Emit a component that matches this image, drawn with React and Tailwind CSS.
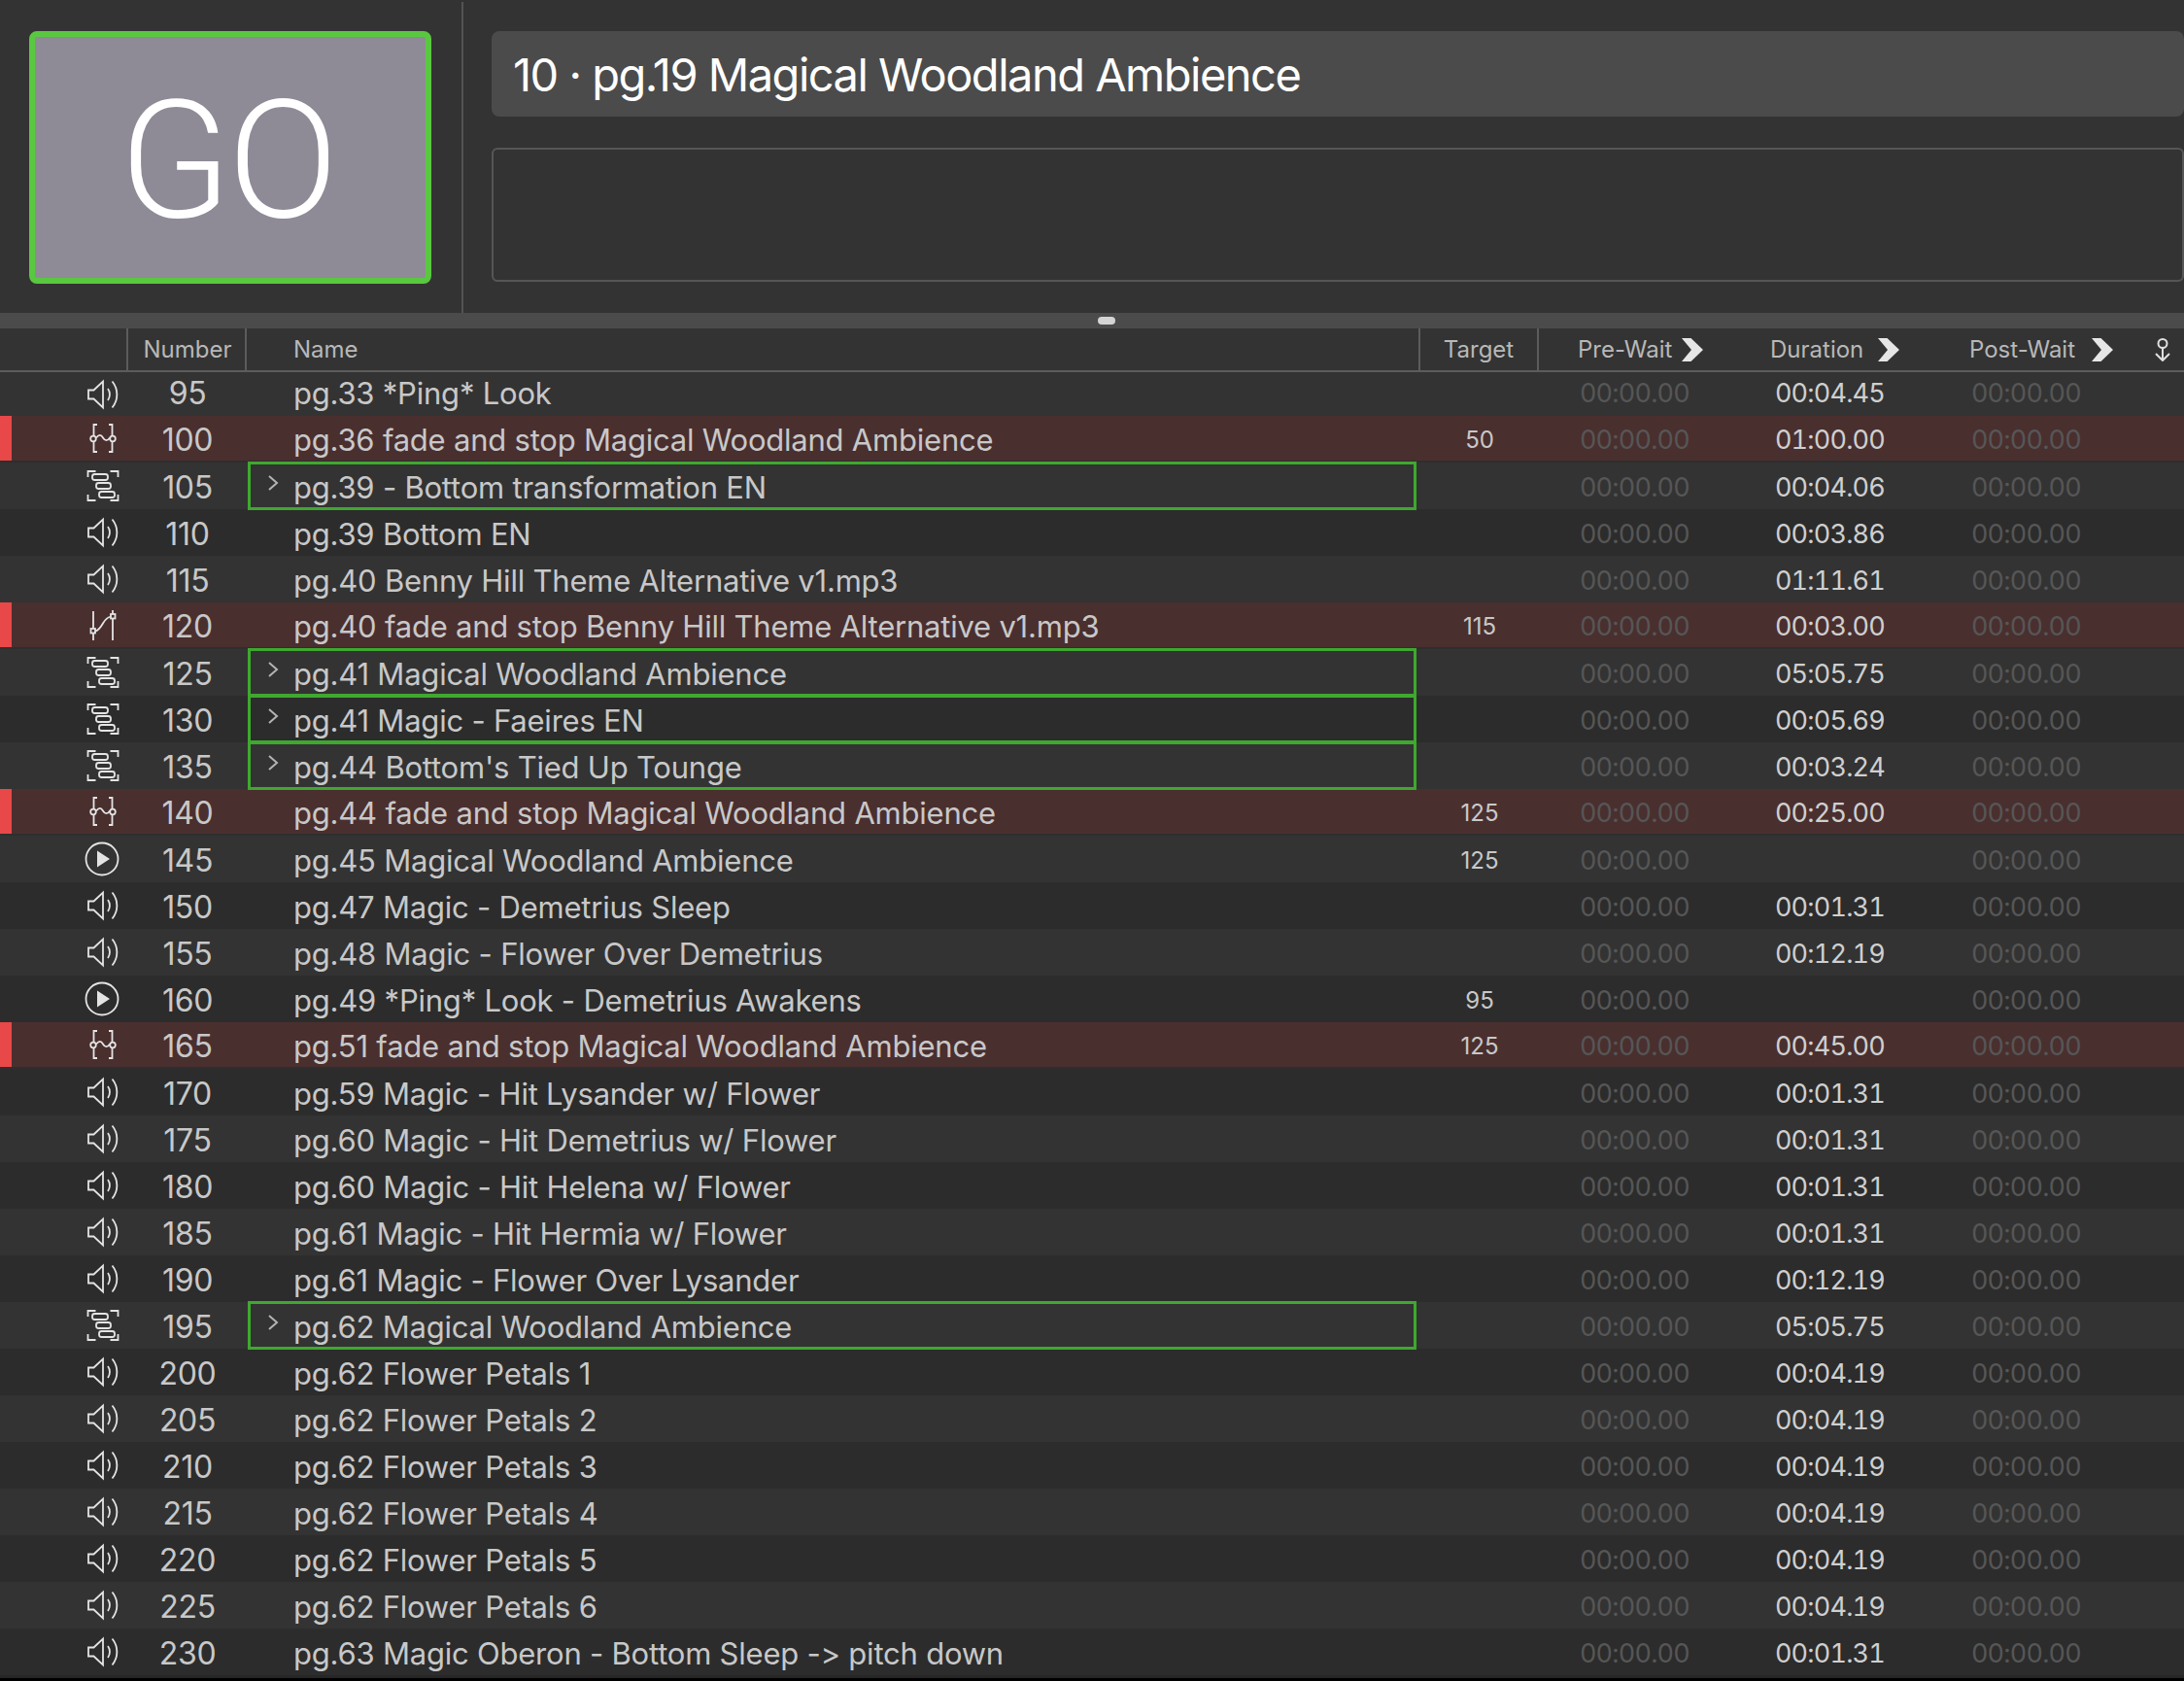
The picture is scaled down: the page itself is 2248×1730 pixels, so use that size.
const SANS = "font-['Inter','Liberation_Sans',sans-serif]";

const cues = [
  { icon: "audio", num: "95", name: "pg.33 *Ping* Look", dur: "00:04.45" },
  { icon: "fade", num: "100", name: "pg.36 fade and stop Magical Woodland Ambience", target: "50", dur: "01:00.00", red: true },
  { icon: "group", num: "105", name: "pg.39 - Bottom transformation EN", dur: "00:04.06" },
  { icon: "audio", num: "110", name: "pg.39 Bottom EN", dur: "00:03.86" },
  { icon: "audio", num: "115", name: "pg.40 Benny Hill Theme Alternative v1.mp3", dur: "01:11.61" },
  { icon: "fadeUp", num: "120", name: "pg.40 fade and stop Benny Hill Theme Alternative v1.mp3", target: "115", dur: "00:03.00", red: true },
  { icon: "group", num: "125", name: "pg.41 Magical Woodland Ambience", dur: "05:05.75" },
  { icon: "group", num: "130", name: "pg.41 Magic - Faeires EN", dur: "00:05.69" },
  { icon: "group", num: "135", name: "pg.44 Bottom's Tied Up Tounge", dur: "00:03.24" },
  { icon: "fade", num: "140", name: "pg.44 fade and stop Magical Woodland Ambience", target: "125", dur: "00:25.00", red: true },
  { icon: "start", num: "145", name: "pg.45 Magical Woodland Ambience", target: "125" },
  { icon: "audio", num: "150", name: "pg.47 Magic - Demetrius Sleep", dur: "00:01.31" },
  { icon: "audio", num: "155", name: "pg.48 Magic - Flower Over Demetrius", dur: "00:12.19" },
  { icon: "start", num: "160", name: "pg.49 *Ping* Look - Demetrius Awakens", target: "95" },
  { icon: "fade", num: "165", name: "pg.51 fade and stop Magical Woodland Ambience", target: "125", dur: "00:45.00", red: true },
  { icon: "audio", num: "170", name: "pg.59 Magic - Hit Lysander w/ Flower", dur: "00:01.31" },
  { icon: "audio", num: "175", name: "pg.60 Magic - Hit Demetrius w/ Flower", dur: "00:01.31" },
  { icon: "audio", num: "180", name: "pg.60 Magic - Hit Helena w/ Flower", dur: "00:01.31" },
  { icon: "audio", num: "185", name: "pg.61 Magic - Hit Hermia w/ Flower", dur: "00:01.31" },
  { icon: "audio", num: "190", name: "pg.61 Magic - Flower Over Lysander", dur: "00:12.19" },
  { icon: "group", num: "195", name: "pg.62 Magical Woodland Ambience", dur: "05:05.75" },
  { icon: "audio", num: "200", name: "pg.62 Flower Petals 1", dur: "00:04.19" },
  { icon: "audio", num: "205", name: "pg.62 Flower Petals 2", dur: "00:04.19" },
  { icon: "audio", num: "210", name: "pg.62 Flower Petals 3", dur: "00:04.19" },
  { icon: "audio", num: "215", name: "pg.62 Flower Petals 4", dur: "00:04.19" },
  { icon: "audio", num: "220", name: "pg.62 Flower Petals 5", dur: "00:04.19" },
  { icon: "audio", num: "225", name: "pg.62 Flower Petals 6", dur: "00:04.19" },
  { icon: "audio", num: "230", name: "pg.63 Magic Oberon - Bottom Sleep -> pitch down", dur: "00:01.31" },
];

function CueIcon({ type }) {
  const common = {
    width: 34,
    height: 34,
    viewBox: "0 0 34 34",
    fill: "none",
    stroke: "#e4e4e4",
    strokeWidth: 1.8,
  };
  if (type === "audio") {
    return (
      <svg {...common}>
        <path d="M2 12.5h5.5L17 3.5v27L7.5 21.5H2z" strokeLinejoin="miter" />
        <path d="M22 11c2.6 3.5 2.6 8.5 0 12M26.5 3.5c6.5 8 6.5 19 0 27" />
      </svg>
    );
  }
  if (type === "group") {
    return (
      <svg {...common}>
        <path d="M1.5 8V2h8M24.5 2h8v6M1.5 26v6h8M24.5 32h8v-6" />
        <rect x="6" y="5" width="16" height="6" rx="2.5" />
        <rect x="10" y="14" width="15" height="6" rx="2.5" />
        <rect x="13" y="23" width="16" height="6" rx="2.5" />
      </svg>
    );
  }
  if (type === "fade") {
    return (
      <svg {...common}>
        <path d="M11 3H7.5v28H11M23 3h3.500v28H23" />
        <circle cx="7" cy="17.5" r="2.8" fill="#4a2f2f" />
        <circle cx="27" cy="17.5" r="2.8" fill="#4a2f2f" />
        <path d="M10 16.5c3-3.5 5-3.5 7 0s5 3.5 7 0" />
      </svg>
    );
  }
  if (type === "fadeUp") {
    return (
      <svg {...common}>
        <path d="M7 3v30M27 2v31" />
        <path d="M9 23.5c3.5-.5 6-4.5 8-8s4-6 8-7" />
        <rect x="4.5" y="21" width="4.5" height="4.5" fill="#4a2f2f" />
        <rect x="25" y="6" width="4.5" height="4.5" fill="#4a2f2f" />
      </svg>
    );
  }
  return (
    <svg {...common} width={36} height={36} viewBox="0 0 36 36">
      <circle cx="18" cy="18" r="16.5" />
      <path d="M13 9.5 26 18 13 26.5z" fill="#e4e4e4" stroke="none" />
    </svg>
  );
}

function HeaderChevron() {
  return (
    <svg className="flex-none" width="22" height="24" viewBox="0 0 22 24" fill="#e6e6e6">
      <path d="M0 0h9.5L22 12 9.5 24H0l10-12z" />
    </svg>
  );
}

function Time({ value, dim, nudge }) {
  return (
    <div className={`text-right tabular-nums text-[27px] tracking-[-0.03em] ${nudge} ${dim ? "text-[#565656]" : "text-[#cfcfcf]"}`}>
      {value}
    </div>
  );
}

function CueRow({ cue, index }) {
  const bg = cue.red ? "bg-[#4a2f2f]" : index % 2 === 0 ? "bg-[#333333]" : "bg-[#2c2c2c]";
  const isGroup = cue.icon === "group";
  // text sits a little below the middle of the row, except the clipped first one
  const nudge = index === 0 ? "pb-[2px]" : "pt-[3px]";

  return (
    <div className={`relative ${index === 0 ? "h-[45px]" : "h-[48px]"} leading-none grid grid-cols-[132px_122px_1208px_122px_155px_201px_202px_1fr] items-center ${bg} ${cue.red ? "border-b-2 border-[#2e2e2e]" : ""}`}>
      {cue.red && <div className="absolute left-0 top-0 bottom-0 w-[12px] bg-[#e84848]" />}
      <div className="flex justify-end pr-[9px]">
        <CueIcon type={cue.icon} />
      </div>
      <div className={`text-center text-[32px] text-[#c8c8c8] tracking-[-0.01em] ${nudge}`}>{cue.num}</div>
      <div className={`relative h-full flex items-center pl-[48px] text-[31px] tracking-[-0.007em] text-[#c8c8c8] whitespace-nowrap [font-feature-settings:'calt'_0] ${nudge}`}>
        {isGroup && (
          <div className="absolute z-10 left-[1px] right-[4px] top-[-1px] bottom-[-1px] border-[3px] border-[#3fa82f]" />
        )}
        {isGroup && (
          <svg className="absolute left-[21px] top-[12px]" width="12" height="18" viewBox="0 0 12 18" fill="none" stroke="#b4b4b4" strokeWidth="2">
            <path d="M2 2l8 7-8 7" />
          </svg>
        )}
        {cue.name}
      </div>
      <div className={`text-center text-[24px] text-[#c8c8c8] ${nudge}`}>{cue.target}</div>
      <Time value="00:00.00" dim nudge={nudge} />
      <Time value={cue.dur} nudge={nudge} />
      <Time value="00:00.00" dim nudge={nudge} />
      <div />
    </div>
  );
}

export default function App() {
  return (
    <div className={`w-[2248px] h-[1730px] overflow-hidden bg-black ${SANS}`}>
      {/* top: go button + cue title */}
      <div className="h-[322px] bg-[#333333] flex pt-[2px]">
        <div className="w-[477px] flex-none pl-[30px] pt-[30px] border-r-2 border-[#545454]">
          <div className="w-[414px] h-[260px] rounded-[8px] border-[6px] border-[#59c840] bg-[#8e8a96] flex items-center justify-center pt-[8px] pr-[6px] text-white text-[168px] font-['Roboto',sans-serif] font-light leading-none tracking-[-0.02em]">
            GO
          </div>
        </div>
        <div className="flex-1 pl-[29px] pt-[30px] flex flex-col">
          <div className="h-[88px] rounded-[8px] bg-[#4b4b4b] flex items-center pl-[22px] pt-[2px] text-white text-[47px] tracking-[-0.032em]">
            10 · pg.19 Magical Woodland Ambience
          </div>
          <div className="mt-[32px] h-[138px] rounded-[6px] border-2 border-[#565656]" />
        </div>
      </div>

      {/* splitter */}
      <div className="h-[16px] bg-[#4b4b4b] flex items-center justify-center">
        <div className="ml-[29px] w-[18px] h-[8px] rounded-full bg-[#d4d4d4]" />
      </div>

      {/* column headers */}
      <div className="h-[45px] bg-[#333333] border-b-2 border-[#5c5c5c] grid grid-cols-[132px_122px_1208px_122px_1fr] items-center text-[24px] text-[#b8b8b8]">
        <div className="h-full border-r-2 border-[#5c5c5c]" />
        <div className="h-full border-r-2 border-[#5c5c5c] flex items-center justify-center pl-[2px]">Number</div>
        <div className="h-full border-r-2 border-[#5c5c5c] flex items-center pl-[48px]">Name</div>
        <div className="h-full border-r-2 border-[#5c5c5c] flex items-center justify-center">Target</div>
        <div className="relative h-full flex items-center pl-[40px]">
          <span className="flex items-center gap-[10px] w-[198px]">Pre-Wait <HeaderChevron /></span>
          <span className="flex items-center gap-[15px] w-[205px]">Duration <HeaderChevron /></span>
          <span className="flex items-center gap-[17px]">Post-Wait <HeaderChevron /></span>
          <svg className="absolute right-[14px] top-[10px]" width="16" height="24" viewBox="0 0 16 24" fill="none" stroke="#e0e0e0" strokeWidth="2">
            <circle cx="8" cy="5.5" r="4.5" />
            <path d="M8 10v13M1 16l7 7 7-7" />
          </svg>
        </div>
      </div>

      {cues.map((cue, i) => (
        <CueRow key={cue.num} cue={cue} index={i} />
      ))}
      <div className="h-[3px] bg-[#262626]" />
    </div>
  );
}
